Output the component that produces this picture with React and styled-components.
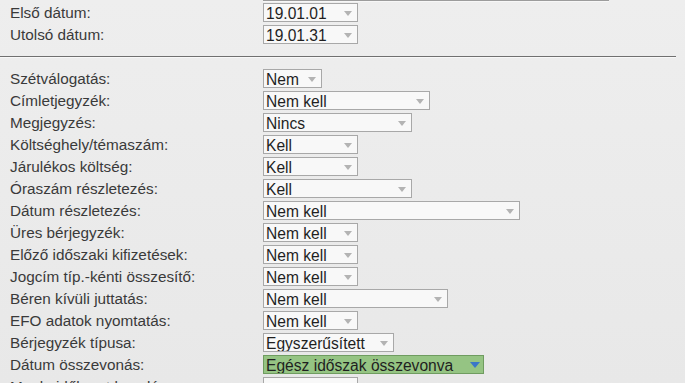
import React from 'react';
import styled, { createGlobalStyle } from 'styled-components';

const Global = createGlobalStyle`
  html, body { margin: 0; padding: 0; background: #ebebeb; }
  body { font-family: "Liberation Sans", Arial, sans-serif; overflow: hidden; }
`;

const Page = styled.div`
  width: 685px;
  height: 383px;
  overflow: hidden;
  background: linear-gradient(#eeeeee, #e8e8e8);
`;

const Panel = styled.div`
  width: 676px;
`;

const TopEdge = styled.div`
  margin-left: 263px;
  width: 346px;
  height: 1px;
  background: #9c9c9c;
  box-shadow: 0 1px 0 #f7f7f7;
`;

const Form = styled.div`
  display: grid;
  grid-template-columns: 253px auto;
  grid-auto-rows: 19px;
  row-gap: 3px;
  padding-left: 10px;
  padding-top: ${(p) => p.$top}px;
  justify-items: start;
  align-items: center;
`;

const Divider = styled.div`
  margin: 12px 0 11px;
  height: 1px;
  background: #707070;
  border-bottom: 1px solid #f8f8f8;
`;

const Label = styled.div`
  font-size: 15.3px;
  line-height: 19px;
  color: #3a3a3a;
  white-space: nowrap;
`;

const SelectBox = styled.div`
  box-sizing: border-box;
  width: ${(p) => p.$w}px;
  height: 19px;
  display: flex;
  align-items: center;
  justify-content: space-between;
  padding: 1px ${(p) => (p.$active ? 3 : 5)}px 0 2px;
  border: 1px solid ${(p) => (p.$active ? '#6f9c60' : '#a8a8a8')};
  background: ${(p) => (p.$active ? '#95c483' : '#f8f8f8')};
  font-size: 15.6px;
  line-height: 17px;
  color: #1f1f1f;
  white-space: nowrap;
  overflow: hidden;
`;

const Arrow = ({ active }) =>
  active ? (
    <svg width="10" height="6" viewBox="0 0 10 6">
      <polygon points="0,0 10,0 5,6" fill="#3a77c8" />
    </svg>
  ) : (
    <svg width="8" height="5" viewBox="0 0 8 5">
      <polygon points="0,0 8,0 4,5" fill="#b3b3b3" />
    </svg>
  );

const Select = ({ value, w, active }) => (
  <SelectBox $w={w} $active={active}>
    <span>{value}</span>
    <Arrow active={active} />
  </SelectBox>
);

const dates = [
  ['Első dátum:', '19.01.01', 95],
  ['Utolsó dátum:', '19.01.31', 95],
];

const options = [
  ['Szétválogatás:', 'Nem', 59],
  ['Címletjegyzék:', 'Nem kell', 167],
  ['Megjegyzés:', 'Nincs', 149],
  ['Költséghely/témaszám:', 'Kell', 95],
  ['Járulékos költség:', 'Kell', 95],
  ['Óraszám részletezés:', 'Kell', 149],
  ['Dátum részletezés:', 'Nem kell', 257],
  ['Üres bérjegyzék:', 'Nem kell', 95],
  ['Előző időszaki kifizetések:', 'Nem kell', 95],
  ['Jogcím típ.-kénti összesítő:', 'Nem kell', 95],
  ['Béren kívüli juttatás:', 'Nem kell', 185],
  ['EFO adatok nyomtatás:', 'Nem kell', 95],
  ['Bérjegyzék típusa:', 'Egyszerűsített', 131],
  ['Dátum összevonás:', 'Egész időszak összevonva', 221, true],
  ['Munkaidőkeret kezelés:', '', 95],
];

export default function App() {
  return (
    <Page>
      <Global />
      <Panel>
        <TopEdge />
        <Form $top={2}>
          {dates.map(([l, v, w]) => (
            <React.Fragment key={l}>
              <Label>{l}</Label>
              <Select value={v} w={w} />
            </React.Fragment>
          ))}
        </Form>
        <Divider />
        <Form $top={0}>
          {options.map(([l, v, w, a]) => (
            <React.Fragment key={l}>
              <Label>{l}</Label>
              <Select value={v} w={w} active={a} />
            </React.Fragment>
          ))}
        </Form>
      </Panel>
    </Page>
  );
}
